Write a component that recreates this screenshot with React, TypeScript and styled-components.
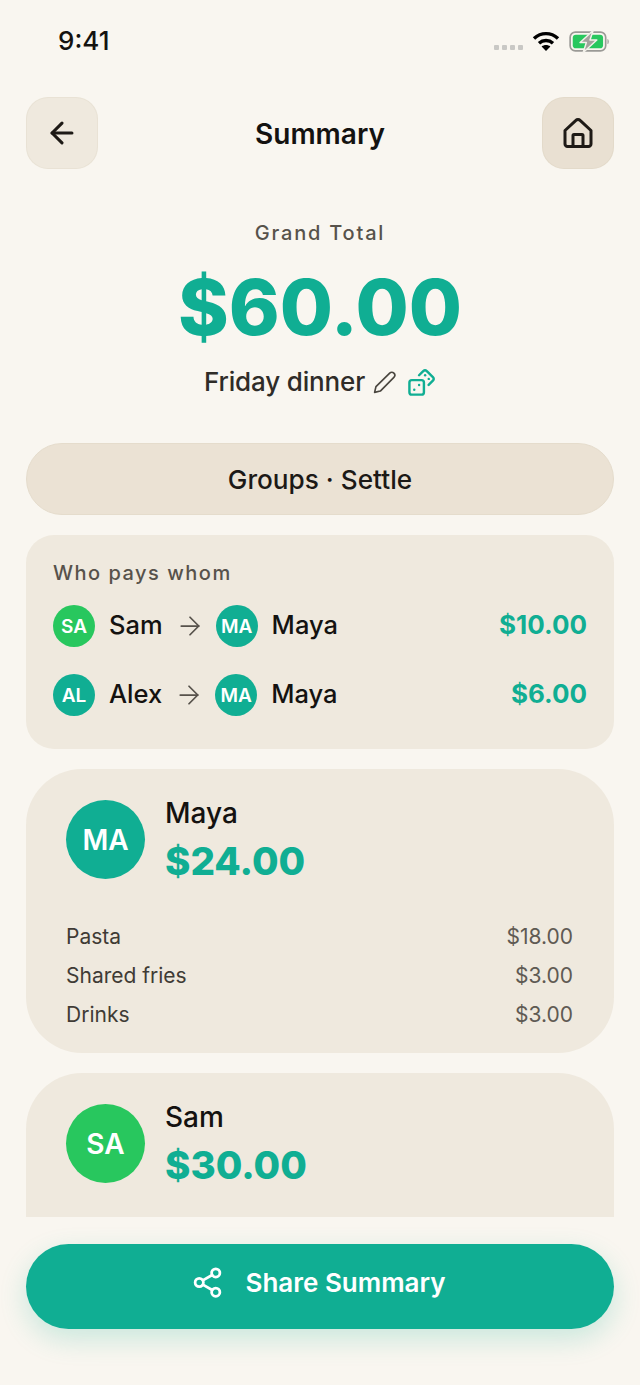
import * as React from 'react';
import styled, { createGlobalStyle } from 'styled-components';
import { ArrowLeft, ArrowRight, Dices, Share2 } from 'lucide-react';

const TEAL = '#10ae93';
const GREEN = '#28c75e';

const GlobalStyle = createGlobalStyle`
    html, body {
        margin: 0;
        padding: 0;
        background: #f9f6f0;
    }
    * {
        box-sizing: border-box;
    }
`;

const Screen = styled.div`
    width: 640px;
    height: 1385px;
    display: flex;
    flex-direction: column;
    overflow: hidden;
    background: #f9f6f0;
    font-family: Inter, "Liberation Sans", sans-serif;
    color: #141210;
`;

const StatusBar = styled.div`
    height: 97px;
    flex: 0 0 auto;
    padding: 24px 29px 0 58px;
    display: flex;
    align-items: flex-start;
    justify-content: space-between;
`;

const Clock = styled.span`
    font-size: 26px;
    line-height: 34px;
    font-weight: 500;
    color: #141210;
`;

const StatusIcons = styled.div`
    display: flex;
    align-items: center;
    gap: 9px;
    height: 34px;
`;

const SignalDots = styled.div`
    display: flex;
    gap: 3px;
    margin-top: 12px;
    span {
        width: 5px;
        height: 5px;
        background: #c9c8c5;
        border-radius: 1px;
    }
`;

const Header = styled.header`
    flex: 0 0 auto;
    padding: 0 26px;
    display: flex;
    align-items: center;
    justify-content: space-between;
`;

const Title = styled.h1`
    margin: 2px 0 0;
    font-size: 28px;
    line-height: 34px;
    font-weight: 600;
`;

const IconButton = styled.button<{ $tone: string }>`
    width: 72px;
    height: 72px;
    padding: 0;
    border: 1px solid rgba(170, 150, 120, 0.08);
    border-radius: 22px;
    display: flex;
    align-items: center;
    justify-content: center;
    background: ${p => p.$tone};
    color: #1e1a16;
`;

const Totals = styled.section`
    flex: 0 0 auto;
    padding-top: 52px;
    display: flex;
    flex-direction: column;
    align-items: center;
`;

const GrandLabel = styled.div`
    font-size: 20px;
    line-height: 24px;
    font-weight: 500;
    letter-spacing: 1.8px;
    color: #57524b;
`;

const GrandAmount = styled.div`
    margin-top: 14px;
    font-size: 77px;
    line-height: 96px;
    font-weight: 800;
    color: ${TEAL};
`;

const EventRow = styled.div`
    margin-top: 9px;
    display: flex;
    align-items: center;
    height: 36px;
`;

const EventName = styled.span`
    font-size: 26px;
    line-height: 36px;
    font-weight: 550;
    letter-spacing: -0.15px;
    color: #2f2c28;
    margin-right: 7px;
`;

const DiceWrap = styled.span`
    display: flex;
    margin-left: 10px;
    color: ${TEAL};
`;

const ScrollArea = styled.main`
    flex: 1 1 0;
    min-height: 0;
    overflow: hidden;
    margin-top: 43px;
    padding: 0 26px;
    display: flex;
    flex-direction: column;
    gap: 20px;
`;

const ModePill = styled.div`
    flex: 0 0 72px;
    border-radius: 36px;
    border: 1px solid #e5dccc;
    background: #ebe2d4;
    display: flex;
    align-items: center;
    justify-content: center;
    font-size: 26.2px;
    font-weight: 550;
    color: #1c1916;
`;

const SettleCard = styled.section`
    flex: 0 0 214px;
    padding: 25px 27px 0;
    border-radius: 28px;
    background: #efe9de;
`;

const SettleHeading = styled.div`
    font-size: 20px;
    line-height: 26px;
    font-weight: 500;
    letter-spacing: 1.5px;
    color: #57524b;
    margin-bottom: 19px;
`;

const SettleRow = styled.div`
    display: flex;
    align-items: center;
    height: 42px;
    margin-bottom: 27px;
`;

const SettleName = styled.span`
    font-size: 25.5px;
    line-height: 40px;
    padding-bottom: 2px;
    font-weight: 500;
    color: #141210;
    margin-left: 14px;
`;

const SettleArrow = styled.span`
    display: flex;
    margin: 0 11px 0 12px;
    color: #57524b;
`;

const SettleAmount = styled.span`
    margin-left: auto;
    font-size: 26px;
    line-height: 40px;
    padding-bottom: 2px;
    font-weight: 700;
    color: ${TEAL};
`;

const Avatar = styled.div<{ $size: number; $tone: string }>`
    flex: 0 0 auto;
    width: ${p => p.$size}px;
    height: ${p => p.$size}px;
    border-radius: 50%;
    display: flex;
    align-items: center;
    justify-content: center;
    background: ${p => p.$tone};
    color: #fff;
    font-weight: 600;
    font-size: ${p => (p.$size > 60 ? 28 : 19)}px;
`;

const PersonCard = styled.section`
    flex: 0 0 auto;
    padding: 31px 40px 19px;
    border-radius: 56px;
    background: #efe9de;
`;

// the last card runs on under the footer
const TrailingCard = styled(PersonCard)`
    min-height: 220px;
`;

const PersonTop = styled.div`
    display: flex;
    align-items: flex-start;
    gap: 20px;
    margin-bottom: 31px;
`;

const PersonInfo = styled.div`
    display: flex;
    flex-direction: column;
    margin-top: -5px;
`;

const PersonName = styled.div`
    font-size: 28px;
    line-height: 36px;
    font-weight: 500;
`;

const PersonAmount = styled.div`
    font-size: 38.5px;
    line-height: 50px;
    font-weight: 800;
    color: ${TEAL};
    margin-top: 5px;
`;

const LineItem = styled.div`
    display: flex;
    justify-content: space-between;
    height: 39px;
    align-items: center;
    padding-right: 1px;
    font-size: 21px;
`;

const LineName = styled.span`
    color: #3f3b35;
`;

const LinePrice = styled.span`
    color: #5f5a53;
`;

const Footer = styled.footer`
    flex: 0 0 168px;
    position: relative;
    padding: 27px 26px 0;
    background: #f9f6f0;
`;

const ShareButton = styled.button`
    width: 100%;
    height: 85px;
    border: 0;
    border-radius: 43px;
    background: ${TEAL};
    box-shadow: 0 10px 28px rgba(16, 174, 147, 0.2);
    color: #fff;
    display: flex;
    align-items: center;
    justify-content: center;
    gap: 21px;
    font-family: inherit;
    font-size: 26px;
    font-weight: 600;
    padding: 0 3px 8px 0;
`;

const WifiIcon = () => (
    <svg width="28" height="22" viewBox="0 0 28 22" fill="none">
        <path d="M2 8.5C9 2 19 2 26 8.5" stroke="#000" strokeWidth="3.4" />
        <path d="M7 13.2C11 9.6 17 9.6 21 13.2" stroke="#000" strokeWidth="3.4" />
        <path d="M14 21l-4.4-4.6c2.6-2 6.2-2 8.8 0z" fill="#000" />
    </svg>
);

const BatteryIcon = () => (
    <svg width="42" height="23" viewBox="0 0 40 22" fill="none">
        <rect x="1" y="2" width="34" height="18" rx="5" stroke="#9b9a96" strokeWidth="1.6" />
        <rect x="3.5" y="4.5" width="29" height="13" rx="3" fill={GREEN} />
        <path d="M36.8 8.5c1.4.4 1.4 4.6 0 5z" fill="#8b8a86" />
        <path d="M23 0.5 L10.5 12 H16.5 L13.5 21.5 L26.5 9.5 H20 Z" fill="#a3a29d" stroke="#f3f1ea" strokeWidth="1.4" strokeLinejoin="round" />
    </svg>
);

const HomeIcon = () => (
    <svg width="30" height="30" viewBox="0 0 30 30" fill="none" stroke="currentColor" strokeWidth="3" strokeLinejoin="round" strokeLinecap="round">
        <path d="M2 12.5 12.9 2.4a3 3 0 0 1 4.2 0L28 12.5V26a2.5 2.5 0 0 1-2.5 2.5h-21A2.5 2.5 0 0 1 2 26z" />
        <path d="M10 28.5V17.5a1 1 0 0 1 1-1h8a1 1 0 0 1 1 1v11" />
    </svg>
);

const PencilIcon = () => (
    <svg width="25" height="25" viewBox="0 0 24 24" fill="none" stroke="#4a463f" strokeWidth="1.6" strokeLinejoin="round">
        <path d="M2.5 21.5 3.8 16 17 3a2.8 2.8 0 0 1 4 4L8 20.2z" />
    </svg>
);

interface Transfer {
    from: string;
    fromTone: string;
    fromInitials: string;
    to: string;
    toInitials: string;
    amount: string;
}

const TRANSFERS: Transfer[] = [
    { from: 'Sam', fromTone: GREEN, fromInitials: 'SA', to: 'Maya', toInitials: 'MA', amount: '$10.00' },
    { from: 'Alex', fromTone: TEAL, fromInitials: 'AL', to: 'Maya', toInitials: 'MA', amount: '$6.00' },
];

const MAYA_ITEMS = [
    { name: 'Pasta', price: '$18.00' },
    { name: 'Shared fries', price: '$3.00' },
    { name: 'Drinks', price: '$3.00' },
];

export default function App() {
    return (
        <Screen>
            <GlobalStyle />
            <StatusBar>
                <Clock>9:41</Clock>
                <StatusIcons>
                    <SignalDots><span /><span /><span /><span /></SignalDots>
                    <WifiIcon />
                    <BatteryIcon />
                </StatusIcons>
            </StatusBar>

            <Header>
                <IconButton $tone="#efe9de"><ArrowLeft size={34} strokeWidth={2.2} /></IconButton>
                <Title>Summary</Title>
                <IconButton $tone="#e9e0d2"><HomeIcon /></IconButton>
            </Header>

            <Totals>
                <GrandLabel>Grand Total</GrandLabel>
                <GrandAmount>$60.00</GrandAmount>
                <EventRow>
                    <EventName>Friday dinner</EventName>
                    <PencilIcon />
                    <DiceWrap><Dices size={29} strokeWidth={2} /></DiceWrap>
                </EventRow>
            </Totals>

            <ScrollArea>
                <ModePill>Groups · Settle</ModePill>

                <SettleCard>
                    <SettleHeading>Who pays whom</SettleHeading>
                    {TRANSFERS.map(t => (
                        <SettleRow key={t.from}>
                            <Avatar $size={42} $tone={t.fromTone}>{t.fromInitials}</Avatar>
                            <SettleName>{t.from}</SettleName>
                            <SettleArrow><ArrowRight size={30} strokeWidth={1.4} /></SettleArrow>
                            <Avatar $size={42} $tone={TEAL}>{t.toInitials}</Avatar>
                            <SettleName>{t.to}</SettleName>
                            <SettleAmount>{t.amount}</SettleAmount>
                        </SettleRow>
                    ))}
                </SettleCard>

                <PersonCard>
                    <PersonTop>
                        <Avatar $size={79} $tone={TEAL}>MA</Avatar>
                        <PersonInfo>
                            <PersonName>Maya</PersonName>
                            <PersonAmount>$24.00</PersonAmount>
                        </PersonInfo>
                    </PersonTop>
                    {MAYA_ITEMS.map(item => (
                        <LineItem key={item.name}>
                            <LineName>{item.name}</LineName>
                            <LinePrice>{item.price}</LinePrice>
                        </LineItem>
                    ))}
                </PersonCard>

                <TrailingCard>
                    <PersonTop>
                        <Avatar $size={79} $tone={GREEN}>SA</Avatar>
                        <PersonInfo>
                            <PersonName>Sam</PersonName>
                            <PersonAmount>$30.00</PersonAmount>
                        </PersonInfo>
                    </PersonTop>
                </TrailingCard>
            </ScrollArea>

            <Footer>
                <ShareButton>
                    <Share2 size={33} strokeWidth={2} />
                    Share Summary
                </ShareButton>
            </Footer>
        </Screen>
    );
}
